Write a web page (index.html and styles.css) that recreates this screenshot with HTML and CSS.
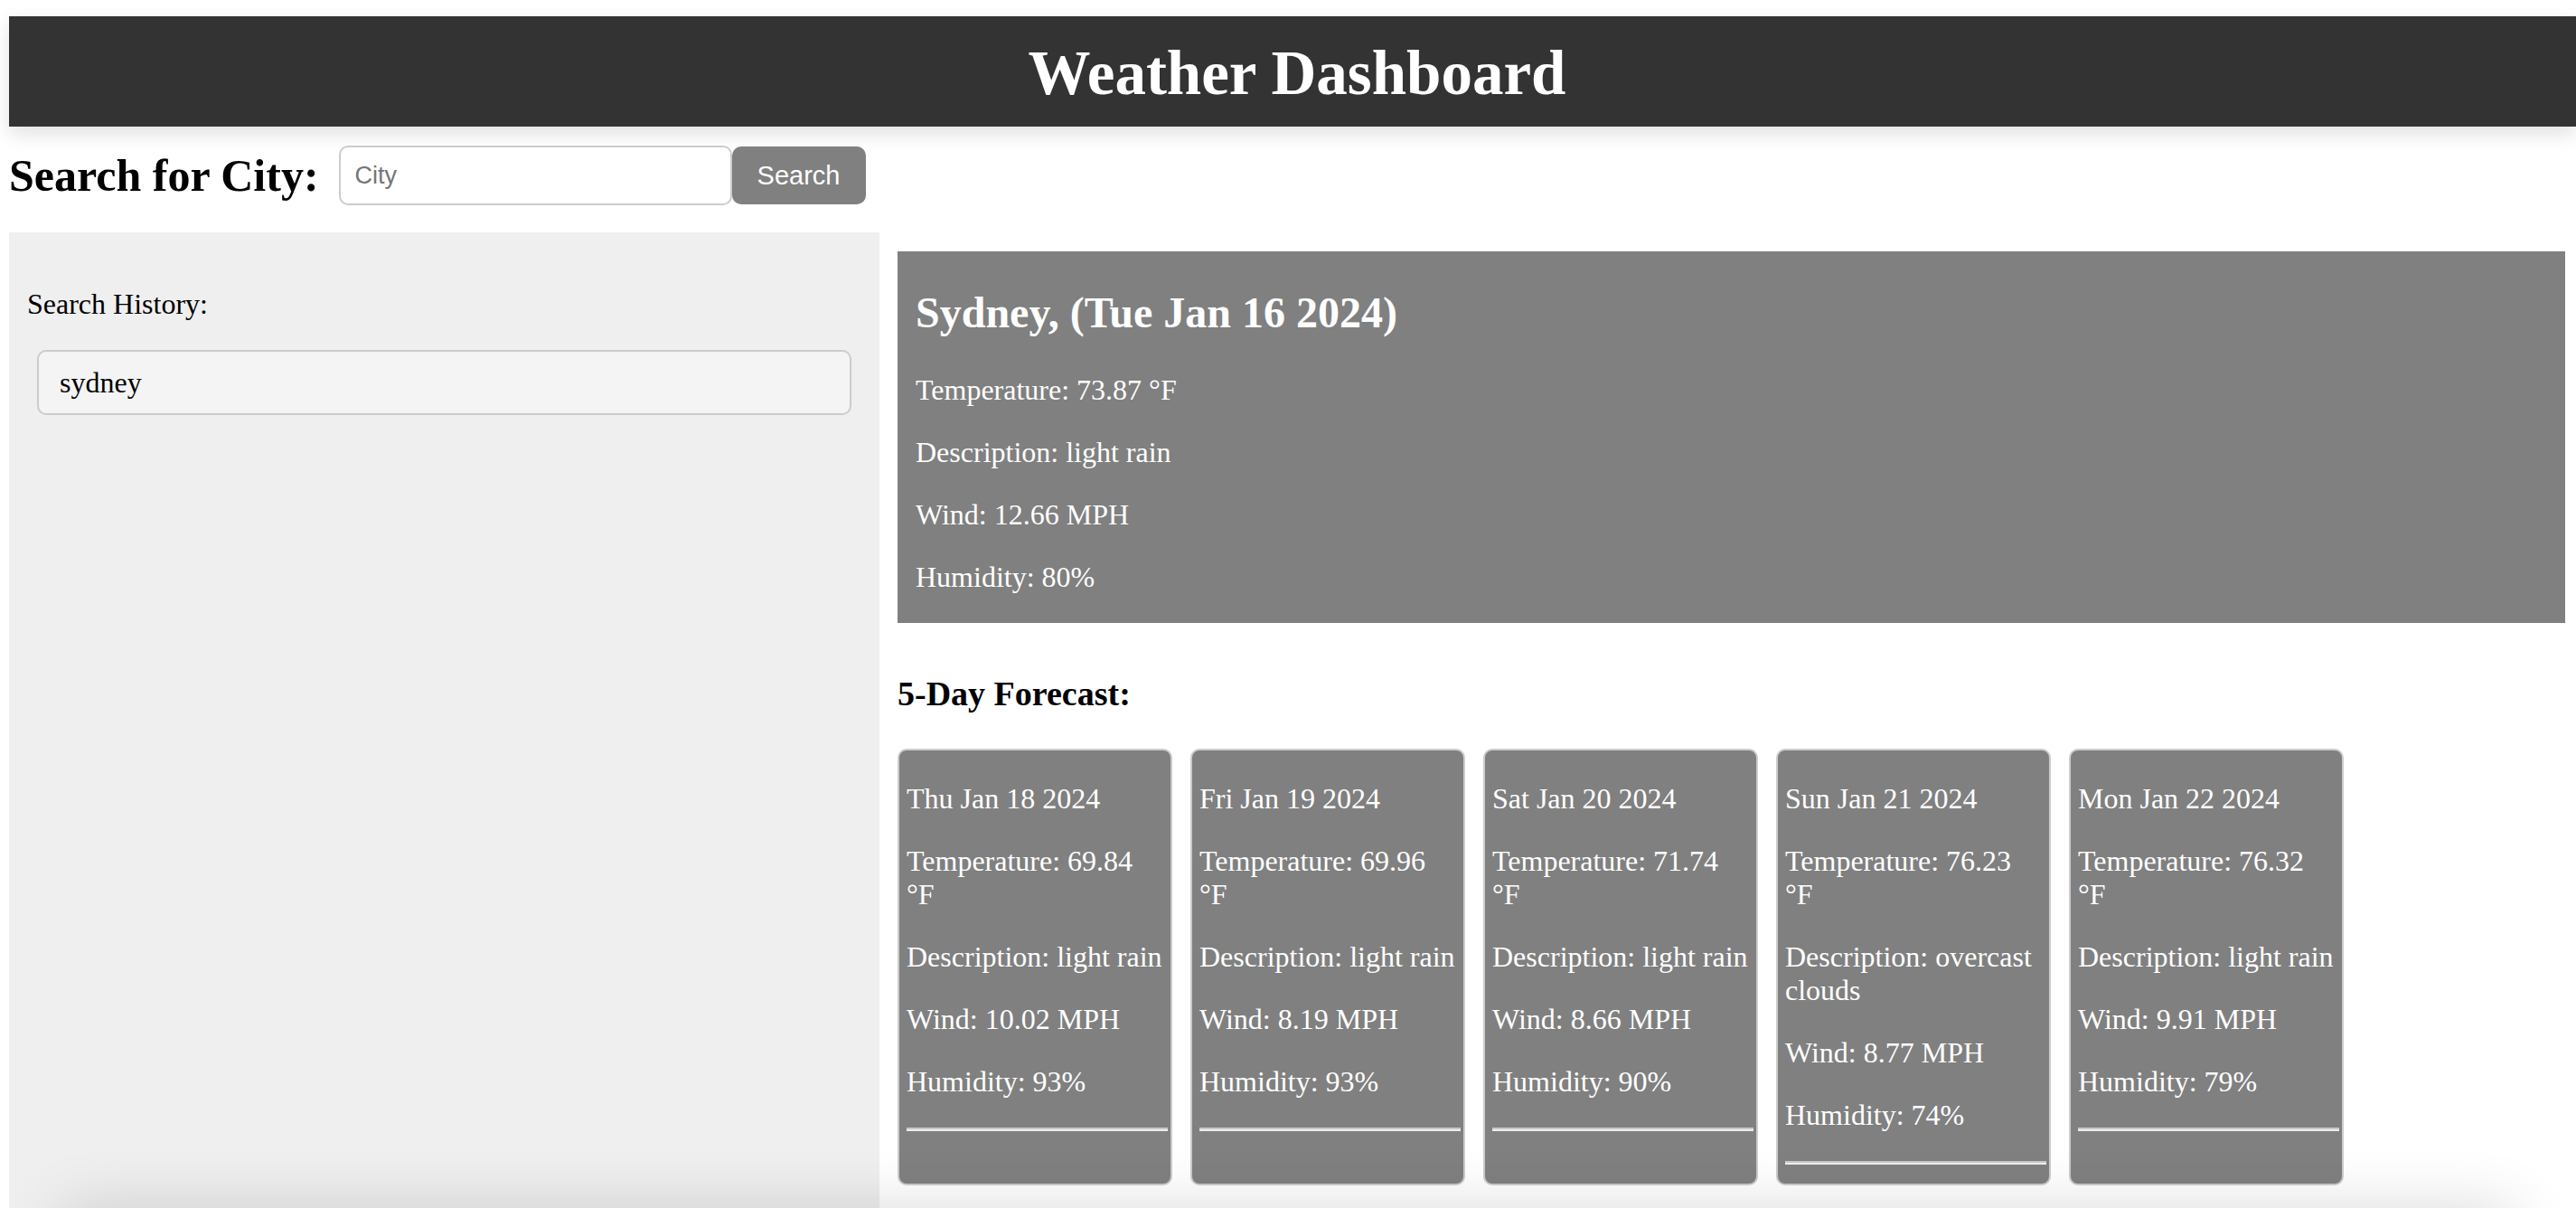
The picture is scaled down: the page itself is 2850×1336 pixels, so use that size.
FILE: index.html
```html
<!DOCTYPE html>
<html lang="en">
<head>
<meta charset="utf-8">
<title>Weather Dashboard</title>
<link rel="stylesheet" href="styles.css">
</head>
<body>
<header class="top-bar">
  <h1 class="title">Weather Dashboard</h1>
</header>

<form class="search-row">
  <h2 class="search-label">Search for City:</h2>
  <input class="city-input" type="text" placeholder="City">
  <button class="search-btn" type="button">Search</button>
</form>

<div class="layout">
  <aside class="sidebar">
    <p class="history-label">Search History:</p>
    <ul class="history-list">
      <li><button class="history-item" type="button">sydney</button></li>
    </ul>
  </aside>

  <main class="content">
    <section class="current">
      <h2 class="current-title">Sydney, (Tue Jan 16 2024)</h2>
      <p class="current-line">Temperature: 73.87 °F</p>
      <p class="current-line">Description: light rain</p>
      <p class="current-line">Wind: 12.66 MPH</p>
      <p class="current-line">Humidity: 80%</p>
    </section>

    <h3 class="forecast-title">5-Day Forecast:</h3>

    <div class="forecast">
      <div class="day-card">
        <p class="day-line">Thu Jan 18 2024</p>
        <p class="day-line">Temperature: 69.84 °F</p>
        <p class="day-line">Description: light rain</p>
        <p class="day-line">Wind: 10.02 MPH</p>
        <p class="day-line">Humidity: 93%</p>
        <hr class="day-rule">
      </div>
      <div class="day-card">
        <p class="day-line">Fri Jan 19 2024</p>
        <p class="day-line">Temperature: 69.96 °F</p>
        <p class="day-line">Description: light rain</p>
        <p class="day-line">Wind: 8.19 MPH</p>
        <p class="day-line">Humidity: 93%</p>
        <hr class="day-rule">
      </div>
      <div class="day-card">
        <p class="day-line">Sat Jan 20 2024</p>
        <p class="day-line">Temperature: 71.74 °F</p>
        <p class="day-line">Description: light rain</p>
        <p class="day-line">Wind: 8.66 MPH</p>
        <p class="day-line">Humidity: 90%</p>
        <hr class="day-rule">
      </div>
      <div class="day-card">
        <p class="day-line">Sun Jan 21 2024</p>
        <p class="day-line">Temperature: 76.23 °F</p>
        <p class="day-line">Description: overcast clouds</p>
        <p class="day-line">Wind: 8.77 MPH</p>
        <p class="day-line">Humidity: 74%</p>
        <hr class="day-rule">
      </div>
      <div class="day-card">
        <p class="day-line">Mon Jan 22 2024</p>
        <p class="day-line">Temperature: 76.32 °F</p>
        <p class="day-line">Description: light rain</p>
        <p class="day-line">Wind: 9.91 MPH</p>
        <p class="day-line">Humidity: 79%</p>
        <hr class="day-rule">
      </div>
    </div>
  </main>
</div>

<footer class="bottom-bar"></footer>
</body>
</html>
```

FILE: styles.css
```css
html {
  overflow: hidden;
}

body {
  margin: 0;
  background: #ffffff;
  color: #000000;
  font-family: "Liberation Serif", "Times New Roman", serif;
}

/* Header */
.top-bar {
  margin: 18px 0 0 10px;
  height: 122px;
  padding: 4px 0 0 10px;
  box-sizing: border-box;
  background: #333333;
  color: #ffffff;
  display: flex;
  align-items: center;
  justify-content: center;
  box-shadow: 0 8px 20px rgba(0, 0, 0, 0.12);
}

.title {
  margin: 0;
  font-size: 69px;
  font-weight: bold;
}

/* Search row */
.search-row {
  display: flex;
  align-items: center;
  height: 66px;
  margin: 21px 0 30px 10px;
}

.search-label {
  margin: 0 22px 0 0;
  font-size: 50px;
  font-weight: bold;
}

.city-input {
  width: 435px;
  height: 66px;
  box-sizing: border-box;
  border: 2px solid #cccccc;
  border-radius: 10px;
  padding: 0 16px;
  font-family: "Liberation Sans", Arial, sans-serif;
  font-size: 27px;
  color: #000000;
  background: #ffffff;
  outline: none;
}

.city-input::placeholder {
  color: #757575;
}

.search-btn {
  width: 148px;
  height: 64px;
  border: none;
  border-radius: 10px;
  background: #808080;
  color: #ffffff;
  font-family: "Liberation Sans", Arial, sans-serif;
  font-size: 29px;
  padding: 0;
}

/* Layout */
.layout {
  display: flex;
  align-items: stretch;
  margin-left: 10px;
}

.sidebar {
  width: 963px;
  flex: 0 0 963px;
  box-sizing: border-box;
  background: #efefef;
  padding: 61px 20px 0;
}

.history-label {
  margin: 0 0 32px;
  font-size: 32px;
}

.history-list {
  list-style: none;
  margin: 0;
  padding: 0 11px 0 11px;
}

.history-item {
  display: block;
  width: 100%;
  height: 72px;
  box-sizing: border-box;
  border: 2px solid #cccccc;
  border-radius: 10px;
  background: #f4f4f4;
  padding: 0 23px;
  text-align: left;
  font-family: "Liberation Serif", "Times New Roman", serif;
  font-size: 32px;
  color: #000000;
}

.content {
  flex: 1;
  min-width: 0;
  padding: 21px 12px 28px 20px;
}

/* Current weather */
.current {
  display: flow-root;
  background: #808080;
  color: #ffffff;
  padding: 0 20px;
}

.current-title {
  margin: 40px 0;
  font-size: 48px;
  font-weight: bold;
}

.current-line {
  margin: 32px 0;
  font-size: 32px;
}

.forecast-title {
  margin: 56px 0 39px;
  font-size: 38px;
  font-weight: bold;
}

/* Forecast cards */
.forecast {
  display: flex;
  align-items: stretch;
  gap: 20px;
}

.day-card {
  display: flow-root;
  width: 304px;
  flex: 0 0 304px;
  box-sizing: border-box;
  border: 2px solid #cccccc;
  border-radius: 10px;
  background: #808080;
  color: #ffffff;
  padding: 3px 3px 5px 8px;
}

.day-line {
  margin: 32px 0;
  padding-right: 4px;
  font-size: 32px;
}

.day-rule {
  margin: 16px 0;
  height: 0;
  border: 0;
  border-top: 2px solid #c9c9c9;
  border-bottom: 2px solid #eeeeee;
}

/* Footer whose shadow rises into the bottom of the view (painted over the columns) */
.bottom-bar {
  position: relative;
  height: 80px;
  margin: 0 70px;
  background: #ffffff;
  box-shadow: 0 0 70px rgba(0, 0, 0, 0.16);
}
```
